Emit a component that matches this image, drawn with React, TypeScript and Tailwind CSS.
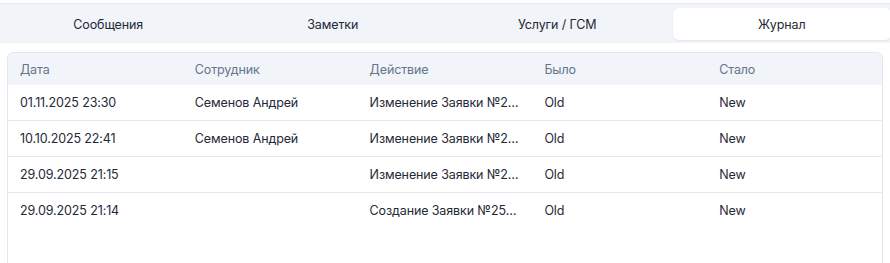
import React from "react";

const tabs = ["Сообщения", "Заметки", "Услуги / ГСМ", "Журнал"];
const headers = ["Дата", "Сотрудник", "Действие", "Было", "Стало"];
const rows = [
  ["01.11.2025 23:30", "Семенов Андрей", "Изменение Заявки №2541 от 29.09.2025", "Old", "New"],
  ["10.10.2025 22:41", "Семенов Андрей", "Изменение Заявки №2541 от 29.09.2025", "Old", "New"],
  ["29.09.2025 21:15", "", "Изменение Заявки №2541 от 29.09.2025", "Old", "New"],
  ["29.09.2025 21:14", "", "Создание Заявки №2541 от 29.09.2025", "Old", "New"],
];

export default function App() {
  return (
    <div
      className="w-[890px] h-[263px] overflow-hidden bg-white pt-[3px] text-[12.5px] tracking-[-0.12px] text-[#1f2937]"
      style={{ fontFamily: "Inter, 'Noto Sans', sans-serif" }}
    >
      <div className="h-[40px] border-t border-[#e6eaf0] bg-[#f1f4f9] overflow-hidden">
        <div className="grid grid-cols-4 gap-[6px] w-[892px] -ml-[1px] pt-[4px]">
          {tabs.map((t, i) => (
            <div
              key={t}
              className={
                "h-[32px] flex items-center justify-center rounded-md pt-[2px] " +
                (i === 3 ? "bg-white shadow-[0_1px_2px_rgba(15,23,42,0.06)]" : "")
              }
            >
              {t}
            </div>
          ))}
        </div>
      </div>
      <div className="mt-[9px] ml-[7px] w-[876px] h-[240px] border border-[#e2e8f0] rounded-md overflow-hidden">
        <div className="grid grid-cols-5 h-[32px] pt-[2px] bg-[#f1f4f9] items-center text-[#64748b]">
          {headers.map((h) => (
            <div key={h} className="px-3">{h}</div>
          ))}
        </div>
        {rows.map((r, i) => (
          <div
            key={i}
            className={
              "grid grid-cols-5 h-[36px] pt-[1px] items-center " +
              (i < rows.length - 1 ? "border-b border-[#e6eaf0]" : "")
            }
          >
            {r.map((c, j) => (
              <div key={j} className="px-3 truncate">{c}</div>
            ))}
          </div>
        ))}
      </div>
    </div>
  );
}
